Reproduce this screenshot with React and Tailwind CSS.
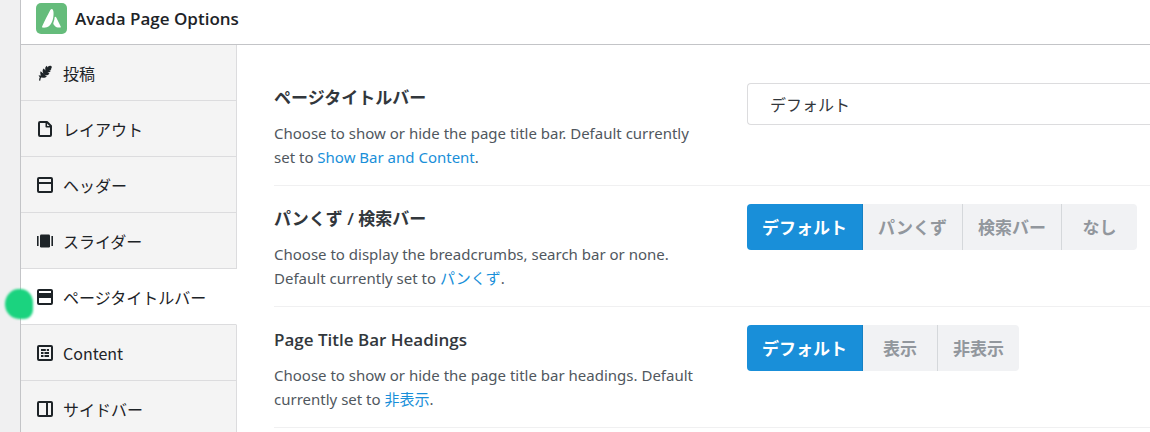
import React, { useState } from 'react';

const icons = {
  post: (
    <>
      <path d="M2.6 15.6 C2.7 13.8 3.2 12.2 4.5 10.3" fill="none" stroke="currentColor" strokeWidth="1.2" />
      <path d="M14.2 1 C12.6 .2 11 1 10.7 2.6 L9.8 .8 C8.2 2 7.8 3.6 8.6 5.6 L6.6 3.5 C5.4 4.9 5.3 6.6 6.4 8.4 L3.6 6.2 C3 8.1 3.3 9.6 4.4 10.8 L1.6 10.3 C2.2 12.2 3.5 12.9 5 12.5 C6.8 13.2 8.6 12.6 9.8 11.2 L7.4 9.8 C9.6 10.6 11.5 10 12.5 8.4 L9.9 7.2 C11.8 7.8 13.1 7.2 13.8 5.8 L12 5 C13.6 5.2 14.4 4.6 14.2 3.5 C15 2.7 15 1.6 14.2 1 Z" fill="currentColor" />
    </>
  ),
  layout: (
    <g fill="none" stroke="currentColor" strokeWidth="2" strokeLinejoin="round">
      <path d="M2 2 a1 1 0 0 1 1-1 H10 L14 5 V14 a1 1 0 0 1-1 1 H3 a1 1 0 0 1-1-1 Z" />
      <path d="M9.3 1.5 V5.7 H13.7" strokeWidth="1.6" />
    </g>
  ),
  header: (
    <g fill="none" stroke="currentColor" strokeWidth="2">
      <rect x="1" y="1" width="14" height="14" rx="1" />
      <path d="M1 6 H15" />
    </g>
  ),
  slider: (
    <g fill="currentColor">
      <rect x="3" y="1.5" width="10" height="13" rx="1.2" />
      <rect x="0" y="3" width="1.6" height="10" />
      <rect x="14.4" y="3" width="1.6" height="10" />
    </g>
  ),
  titleBar: (
    <>
      <rect x="1" y="1" width="14" height="14" rx="1" fill="none" stroke="currentColor" strokeWidth="2" />
      <path d="M1 4 H15 V9 H1 Z" fill="currentColor" />
    </>
  ),
  content: (
    <g fill="none" stroke="currentColor">
      <rect x="1" y="1" width="14" height="14" rx="1" strokeWidth="2" />
      <path d="M4 5 H8.8 M9.8 5 H12 M4 8 H6.5 M7.5 8 H12 M4 11 H6.5 M7.5 11 H12" strokeWidth="1.8" />
    </g>
  ),
  sidebar: (
    <g fill="none" stroke="currentColor" strokeWidth="2">
      <rect x="1" y="1" width="14" height="14" rx="1" />
      <path d="M10 1 V15" />
    </g>
  ),
};

const tabs = [
  { id: 'post', label: '投稿' },
  { id: 'layout', label: 'レイアウト' },
  { id: 'header', label: 'ヘッダー' },
  { id: 'slider', label: 'スライダー' },
  { id: 'titleBar', label: 'ページタイトルバー' },
  { id: 'content', label: 'Content' },
  { id: 'sidebar', label: 'サイドバー' },
];

function Logo() {
  return (
    <svg className="w-[31px] h-[31px] shrink-0" viewBox="0 0 31 31" aria-hidden="true">
      <rect width="31" height="31" rx="5" fill="#65bc7b" />
      <path d="M15.8 6 C16.8 6 17.4 7.5 17.5 9.2 C17.8 13.5 16.8 19.2 13.9 22.2 C11.8 24.3 9.2 24.8 6.7 24.6 C6 24.5 5.9 24 6.2 23.3 C8.6 18 11.6 12 14.3 7 C14.8 6.3 15.2 6 15.8 6 Z" fill="#fff" />
      <path d="M19.3 13.8 C19.8 13.8 20.1 14.2 20.4 14.8 L24.6 23.2 C25 24.1 24.8 24.6 24 24.6 C21.2 24.8 18.9 23.6 17.6 21.4 C17.1 20.5 17.3 19.7 17.7 18.7 C18.3 17.1 18.5 15.8 18.6 14.6 C18.6 14.1 18.9 13.8 19.3 13.8 Z" fill="#fff" />
    </svg>
  );
}

function Tab({ tab, active, onClick }) {
  return (
    <li className="relative">
      <button
        type="button"
        onClick={onClick}
        className={`flex items-center gap-2.5 w-full h-14 pl-4 text-base text-left text-[#1d2327] border-b border-b-[#dcdcde] border-r ${
          active ? 'bg-white border-r-white' : 'bg-[#f4f4f4] border-r-[#dcdcde]'
        }`}
      >
        <svg className="w-4 h-4 shrink-0" viewBox="0 0 16 16" aria-hidden="true">{icons[tab.id]}</svg>
        {tab.label}
      </button>
      {active && (
        <span className="absolute -left-4 top-5 w-7 h-[30px] rounded-[50%_45%_30%_50%] bg-[#1bd37f] blur-[1px]" />
      )}
    </li>
  );
}

function Option({ title, description, value, htmlFor, children }) {
  return (
    <div className="grid grid-cols-[54%_1fr] pt-[18px] pb-4 border-b border-[#f0f0f1]">
      <div className="pr-10">
        <h3 className="text-[17px] leading-[30px] font-semibold text-[#32373c] font-['Open_Sans','Noto_Sans_CJK_JP',sans-serif]">
          {htmlFor ? <label htmlFor={htmlFor}>{title}</label> : title}
        </h3>
        <p className="mt-2 text-[15px] leading-6 text-[#50575e] font-['Noto_Sans','Noto_Sans_CJK_JP',sans-serif]">
          {description} <a href="#" className="text-[#198fd9]">{value}</a>.
        </p>
      </div>
      <div>{children}</div>
    </div>
  );
}

function ButtonSet({ label, options }) {
  const [selected, setSelected] = useState(options[0]);

  return (
    <div role="group" aria-label={label} className="inline-flex rounded overflow-hidden">
      {options.map((option) => (
        <button
          key={option}
          type="button"
          aria-pressed={option === selected}
          onClick={() => setSelected(option)}
          className={`h-[46px] min-w-[75px] px-[15px] text-[17px] font-bold whitespace-nowrap border-r last:border-r-0 ${
            option === selected
              ? 'bg-[#198fd9] border-[#1580c4] text-white'
              : 'bg-[#f1f2f4] border-[#d5d8db] text-[#92979d]'
          }`}
        >
          {option}
        </button>
      ))}
    </div>
  );
}

function App() {
  const [active, setActive] = useState('titleBar');

  return (
    <div className="min-h-screen max-h-screen overflow-hidden flex bg-[#f0f0f1] pl-5 font-['Noto_Sans_CJK_JP',sans-serif]">
      <div className="flex-1 min-w-0 flex flex-col bg-white border-l border-[#c3c4c7]">
        <header className="flex items-center gap-2 pt-[3px] pb-2.5 pl-[15px] border-b border-[#c3c4c7]">
          <Logo />
          <h2 className="text-[17px] leading-6 font-semibold text-[#1d2327] font-['Open_Sans',sans-serif]">Avada Page Options</h2>
        </header>
        <div className="flex flex-1">
          <nav className="w-[216px] shrink-0">
            <ul>
              {tabs.map((tab) => (
                <Tab key={tab.id} tab={tab} active={tab.id === active} onClick={() => setActive(tab.id)} />
              ))}
            </ul>
          </nav>
          <main className="flex-1 min-w-0 pt-5 pl-[37px]">
            <Option
              title="ページタイトルバー"
              description="Choose to show or hide the page title bar. Default currently set to"
              value="Show Bar and Content"
              htmlFor="page-title-bar"
            >
              <select
                id="page-title-bar"
                className="appearance-none block w-full h-[42px] px-[22px] text-base text-[#32373c] bg-white border border-r-0 border-[#dcdcde] rounded-l"
              >
                <option>デフォルト</option>
              </select>
            </Option>
            <Option
              title="パンくず / 検索バー"
              description="Choose to display the breadcrumbs, search bar or none. Default currently set to"
              value="パンくず"
            >
              <ButtonSet label="パンくず / 検索バー" options={['デフォルト', 'パンくず', '検索バー', 'なし']} />
            </Option>
            <Option
              title="Page Title Bar Headings"
              description="Choose to show or hide the page title bar headings. Default currently set to"
              value="非表示"
            >
              <ButtonSet label="Page Title Bar Headings" options={['デフォルト', '表示', '非表示']} />
            </Option>
          </main>
        </div>
      </div>
    </div>
  );
}

export default App;
